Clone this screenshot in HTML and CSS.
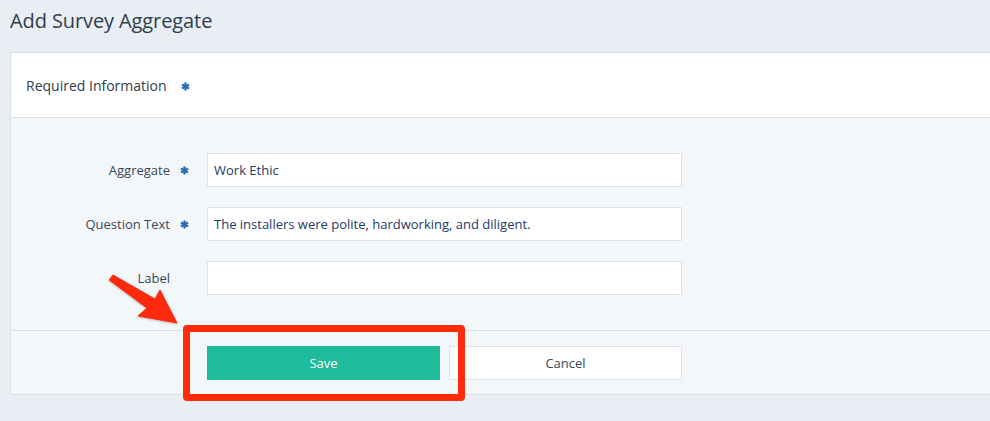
FILE: index.html
```html
<!DOCTYPE html>
<html>
<head>
<meta charset="utf-8">
<link rel="stylesheet" href="styles.css">
</head>
<body>
<h1 class="page-title">Add Survey Aggregate</h1>
<div class="panel">
  <div class="panel-header">
    <span>Required Information</span>
    <svg class="req" viewBox="0 0 10 10"><g stroke="#2c6cb3" stroke-width="2.6" stroke-linecap="butt"><line x1="5" y1="0.5" x2="5" y2="9.5"/><line x1="1.1" y1="2.75" x2="8.9" y2="7.25"/><line x1="1.1" y1="7.25" x2="8.9" y2="2.75"/></g></svg>
  </div>
  <div class="panel-body">
    <div class="row">
      <label class="lbl">Aggregate</label>
      <span class="mark"><svg class="req" viewBox="0 0 10 10"><g stroke="#2c6cb3" stroke-width="2.6"><line x1="5" y1="0.5" x2="5" y2="9.5"/><line x1="1.1" y1="2.75" x2="8.9" y2="7.25"/><line x1="1.1" y1="7.25" x2="8.9" y2="2.75"/></g></svg></span>
      <div class="input">Work Ethic</div>
    </div>
    <div class="row">
      <label class="lbl">Question Text</label>
      <span class="mark"><svg class="req" viewBox="0 0 10 10"><g stroke="#2c6cb3" stroke-width="2.6"><line x1="5" y1="0.5" x2="5" y2="9.5"/><line x1="1.1" y1="2.75" x2="8.9" y2="7.25"/><line x1="1.1" y1="7.25" x2="8.9" y2="2.75"/></g></svg></span>
      <div class="input">The installers were polite, hardworking, and diligent.</div>
    </div>
    <div class="row">
      <label class="lbl">Label</label>
      <span class="mark"></span>
      <div class="input"></div>
    </div>
  </div>
  <div class="panel-footer">
    <button class="btn btn-save">Save</button>
    <button class="btn btn-cancel">Cancel</button>
  </div>
</div>
<div class="highlight"></div>
<svg class="arrow" width="100" height="70" viewBox="0 0 100 70">
  <defs>
    <filter id="sh" x="-20%" y="-20%" width="140%" height="140%">
      <feDropShadow dx="0" dy="1" stdDeviation="1" flood-color="#000" flood-opacity="0.25"/>
    </filter>
  </defs>
  <polygon filter="url(#sh)" fill="#fb2a10" stroke="#fb2a10" stroke-width="1" stroke-linejoin="round" points="8,3 50,27 55,18 72,51 33,44 42,36 4,8"/>
</svg>
</body>
</html>
```
FILE: styles.css
```css
html, body {
  margin: 0;
  padding: 0;
}
body {
  background: #e8eef4;
  font-family: "Open Sans", "Noto Sans", sans-serif;
  overflow: hidden;
  width: 990px;
  height: 421px;
  position: relative;
}
.page-title {
  margin: 0;
  padding: 7px 0 0 10px;
  height: 52px;
  box-sizing: border-box;
  font-size: 20px;
  font-weight: 400;
  color: #2e3d4f;
  letter-spacing: -0.1px;
}
.panel {
  margin-left: 10px;
  width: 1000px;
  border: 1px solid #d8dfe6;
  background: #f4f7fa;
}
.panel-header {
  height: 64px;
  background: #fff;
  border-bottom: 1px solid #d8dfe6;
  display: flex;
  align-items: center;
  padding-left: 15px;
  font-size: 14px;
  color: #2f3d4c;
}
.panel-header .req {
  margin-left: 14px;
  margin-top: 2px;
}
.req {
  width: 9px;
  height: 9px;
  display: block;
}
.panel-body {
  padding: 35px 0 35px;
  display: flex;
  flex-direction: column;
  gap: 20px;
  border-bottom: 1px solid #d8dfe6;
}
.row {
  display: flex;
  align-items: center;
  height: 34px;
}
.lbl {
  width: 159px;
  text-align: right;
  font-size: 13px;
  color: #3a4756;
}
.mark {
  width: 37px;
  display: flex;
  justify-content: flex-start;
  padding-left: 10px;
  box-sizing: border-box;
}
.input {
  width: 475px;
  height: 34px;
  box-sizing: border-box;
  border: 1px solid #dde3e9;
  background: #fff;
  padding: 0 6px;
  display: flex;
  align-items: center;
  font-size: 13px;
  color: #1e3a66;
}
.panel-footer {
  padding: 15px 0 14px 196px;
  display: flex;
  gap: 9px;
}
.btn {
  width: 233px;
  height: 34px;
  font-family: "Open Sans", "Noto Sans", sans-serif;
  font-size: 13px;
  border-radius: 0;
  cursor: pointer;
}
.btn-save {
  background: #1dbc9b;
  color: #fff;
  border: none;
}
.btn-cancel {
  background: #fff;
  color: #3a4756;
  border: 1px solid #dde3e9;
}
.highlight {
  position: absolute;
  left: 183px;
  top: 325px;
  width: 282px;
  height: 76px;
  box-sizing: border-box;
  border: 7px solid #fe2a08;
  border-radius: 4px;
}
.arrow {
  position: absolute;
  left: 105px;
  top: 272px;
}
```
